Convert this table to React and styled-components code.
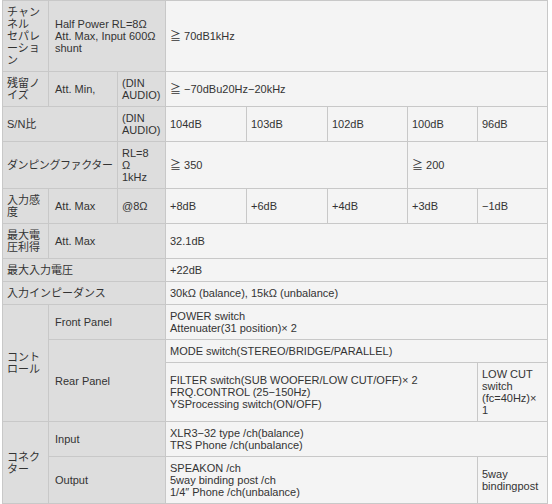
import React from "react";
import styled, { createGlobalStyle } from "styled-components";

const GlobalStyle = createGlobalStyle`
    body {
        margin: 0;
        background: #ffffff;
        font-family: "Liberation Sans", "Noto Sans CJK JP", sans-serif;
        color: #333333;
    }
`;

const Page = styled.div`
    padding: 0 0 0 2px;
`;

const SpecTable = styled.table`
    width: 545px;
    table-layout: fixed;
    border-collapse: collapse;
    font-size: 11px;
    line-height: 12px;
`;

const Cell = styled.td`
    border: 1px solid #c8c8c8;
    padding: 5px ${(p) => (p.$wide ? 6 : 4)}px 5px ${(p) => (p.$wide ? 6 : 4)}px;
    vertical-align: middle;
    text-align: left;
    word-break: break-all;
    white-space: ${(p) => (p.$nowrap ? "nowrap" : "normal")};
    letter-spacing: ${(p) => (p.$tight ? "-0.4px" : "normal")};
`;

const Head = styled(Cell).attrs({ as: "th" })`
    background: #dddddd;
    font-weight: normal;
`;

const Data = styled(Cell)`
    background: #f4f4f4;
`;

const widths = [46, 69, 48, 81, 81, 80, 70, 70];

function App() {
    return (
        <Page>
            <GlobalStyle />
            <SpecTable>
                <colgroup>
                    {widths.map((w, i) => (
                        <col key={i} style={{ width: w }} />
                    ))}
                </colgroup>
                <tbody>
                    <tr>
                        <Head>
                            チャン<br />ネル<br />セパレ<br />ーショ<br />ン
                        </Head>
                        <Head colSpan={2} $wide>
                            Half Power RL=8Ω<br />Att. Max, Input 600Ω<br />shunt
                        </Head>
                        <Data colSpan={5}>≧ 70dB1kHz</Data>
                    </tr>
                    <tr>
                        <Head>
                            残留ノ<br />イズ
                        </Head>
                        <Head $wide>Att. Min,</Head>
                        <Head>
                            (DIN<br />AUDIO)
                        </Head>
                        <Data colSpan={5}>≧ −70dBu20Hz−20kHz</Data>
                    </tr>
                    <tr>
                        <Head colSpan={2}>S/N比</Head>
                        <Head>
                            (DIN<br />AUDIO)
                        </Head>
                        <Data>104dB</Data>
                        <Data>103dB</Data>
                        <Data>102dB</Data>
                        <Data>100dB</Data>
                        <Data>96dB</Data>
                    </tr>
                    <tr>
                        <Head colSpan={2} $nowrap $tight>
                            ダンピングファクター
                        </Head>
                        <Head>
                            RL=8<br />Ω<br />1kHz
                        </Head>
                        <Data colSpan={3}>≧ 350</Data>
                        <Data colSpan={2}>≧ 200</Data>
                    </tr>
                    <tr>
                        <Head>
                            入力感<br />度
                        </Head>
                        <Head $wide>Att. Max</Head>
                        <Head>@8Ω</Head>
                        <Data>+8dB</Data>
                        <Data>+6dB</Data>
                        <Data>+4dB</Data>
                        <Data>+3dB</Data>
                        <Data>−1dB</Data>
                    </tr>
                    <tr>
                        <Head>
                            最大電<br />圧利得
                        </Head>
                        <Head colSpan={2} $wide>
                            Att. Max
                        </Head>
                        <Data colSpan={5}>32.1dB</Data>
                    </tr>
                    <tr>
                        <Head colSpan={3}>最大入力電圧</Head>
                        <Data colSpan={5}>+22dB</Data>
                    </tr>
                    <tr>
                        <Head colSpan={3}>入力インピーダンス</Head>
                        <Data colSpan={5}>30kΩ (balance), 15kΩ (unbalance)</Data>
                    </tr>
                    <tr>
                        <Head rowSpan={3}>
                            コント<br />ロール
                        </Head>
                        <Head colSpan={2} $wide>
                            Front Panel
                        </Head>
                        <Data colSpan={5}>
                            POWER switch<br />Attenuater(31 position)× 2
                        </Data>
                    </tr>
                    <tr>
                        <Head colSpan={2} rowSpan={2} $wide>
                            Rear Panel
                        </Head>
                        <Data colSpan={5}>MODE switch(STEREO/BRIDGE/PARALLEL)</Data>
                    </tr>
                    <tr>
                        <Data colSpan={4}>
                            FILTER switch(SUB WOOFER/LOW CUT/OFF)× 2<br />
                            FRQ.CONTROL (25−150Hz)<br />
                            YSProcessing switch(ON/OFF)
                        </Data>
                        <Data>
                            LOW CUT<br />switch<br />(fc=40Hz)×<br />1
                        </Data>
                    </tr>
                    <tr>
                        <Head rowSpan={2}>
                            コネク<br />ター
                        </Head>
                        <Head colSpan={2} $wide>
                            Input
                        </Head>
                        <Data colSpan={5}>
                            XLR3−32 type /ch(balance)<br />TRS Phone /ch(unbalance)
                        </Data>
                    </tr>
                    <tr>
                        <Head colSpan={2} $wide>
                            Output
                        </Head>
                        <Data colSpan={4}>
                            SPEAKON /ch<br />5way binding post /ch<br />1/4″ Phone /ch(unbalance)
                        </Data>
                        <Data>
                            5way<br />bindingpost
                        </Data>
                    </tr>
                </tbody>
            </SpecTable>
        </Page>
    );
}

export default App;
